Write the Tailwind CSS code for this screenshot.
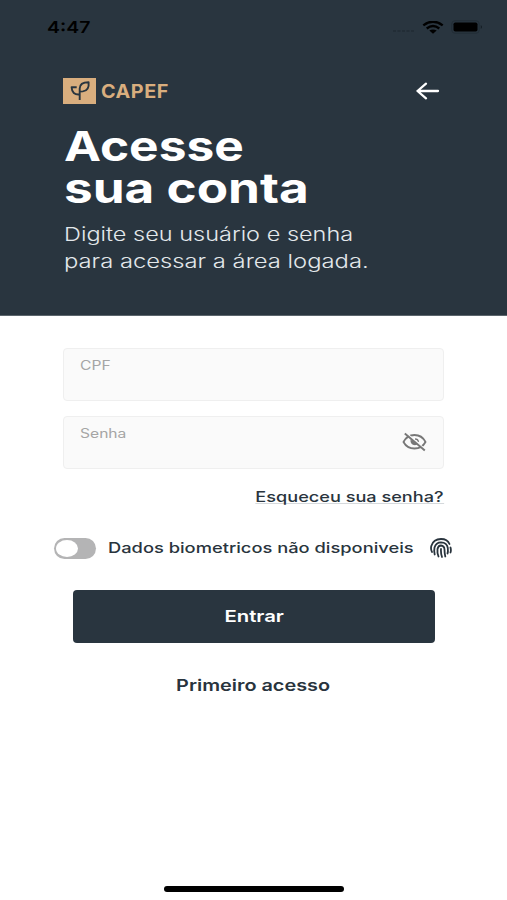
<!DOCTYPE html>
<html lang="pt-BR">
<head>
<meta charset="utf-8">
<meta name="viewport" content="width=device-width, initial-scale=1">
<title>CAPEF</title>
<script src="https://cdn.jsdelivr.net/npm/@tailwindcss/browser@4"></script>
</head>
<body class="bg-white">
<div class="flex h-[900px] w-[507px] flex-col overflow-hidden whitespace-nowrap bg-white font-['Inter',sans-serif] text-[#29343d]">
  <header class="flex h-[316px] shrink-0 flex-col border-b border-[#5b656c] bg-[#29353f]">
    <div class="flex h-[54px] items-center pl-[47px] pr-[24px] text-black">
      <span class="origin-left scale-x-[1.18] text-[16.5px] font-semibold leading-none">4:47</span>
      <div class="ml-auto flex items-center">
        <svg class="mt-[7px] mr-[6px]" width="24" height="4" viewBox="0 0 24 4"><path d="M1 2H23" stroke="#222d36" stroke-width="2" stroke-dasharray="3 1.5" fill="none"/></svg>
        <svg width="22" height="13" viewBox="0 0 22 13" fill="none" stroke="#000"><path d="M1.3 4.4Q11-3 20.700 4.400" stroke-width="2.400"/><path d="M4.700 7.500Q11 2.600 17.300 7.500" stroke-width="2.300"/><path d="M7.300 9.600Q11 7.200 14.700 9.600L11 12.800Z" fill="#000" stroke="none"/></svg>
        <svg class="ml-[7px]" width="32" height="14" viewBox="0 0 32 14"><rect x=".8" y=".8" width="27.400" height="12.400" rx="3" fill="none" stroke="#222d36" /><rect x="2.500" y="2.500" width="24" height="9" rx="1.800"/><path d="M29.800 5Q32 7 29.800 9Z" fill="#111a20"/></svg>
      </div>
    </div>
    <div class="flex h-[70px] items-center pl-[63px] pr-[67px]">
      <svg class="mt-[3px]" width="33" height="26" viewBox="0 0 33 26"><rect width="33" height="26" fill="#d9ae7e"/><g fill="none" stroke="#29353f" stroke-width="1.900" stroke-linejoin="round"><path d="M16.700 22V10.500Q16.800 4.400 25.600 4.300Q26.500 12.500 19.800 13.400L16.700 13.600"/><path d="M16.600 16.500Q9 17.200 8.600 9.300H13.700"/></g></svg>
      <span class="ml-[5px] mt-[4px] origin-left scale-x-[1.04] text-[19px] font-bold leading-none tracking-[0.5px] text-[#d9ae7e]">CAPEF</span>
      <svg class="ml-auto mt-[3px]" width="25" height="18" viewBox="0 0 25 18" fill="none" stroke="#fff" stroke-width="2.300" stroke-linecap="round" stroke-linejoin="round"><path d="M11 1.700L2.500 9L11 16.300M2.500 9H23"/></svg>
    </div>
    <h1 class="ml-[64px] mt-px text-[41px] font-bold leading-[42px] text-white">
      <span class="block w-max origin-left scale-x-[1.21]">Acesse</span>
      <span class="block w-max origin-left scale-x-[1.25]">sua conta</span>
    </h1>
    <p class="ml-[64px] mt-[12px] text-[18.5px] font-light leading-[27px] text-[#e3e8eb]">
      <span class="block w-max origin-left scale-x-[1.27]">Digite seu usuário e senha</span>
      <span class="block w-max origin-left scale-x-[1.285]">para acessar a área logada.</span>
    </p>
  </header>
  <main class="flex flex-1 flex-col pt-[32px]">
    <div class="mx-[63px] h-[53px] rounded-[4px] border border-[#efefef] bg-[#fafafa] pl-[16px] pt-[8px]">
      <label class="block w-max origin-left scale-x-[1.25] text-[12.5px] leading-[17px] text-[#a5a5a5]">CPF</label>
    </div>
    <div class="mx-[63px] mt-[15px] flex h-[53px] rounded-[4px] border border-[#efefef] bg-[#fafafa] pl-[16px] pr-[16px] pt-[8px]">
      <label class="block h-[17px] w-max origin-left scale-x-[1.25] text-[12.5px] leading-[17px] text-[#a5a5a5]">Senha</label>
      <svg class="ml-auto mt-[7px]" width="25" height="20" viewBox="0 0 25 20" fill="none" stroke="#777"><path d="M1.500 10Q5 3 12.500 3T23.500 10Q20 16.500 12.500 16.500T1.500 10Z" stroke-width="1.800"/><path d="M8.500 7.500Q8 12.800 13 13.200L15.800 12.300Z" fill="#777" stroke="none"/><path d="M13 7Q16 7 16.500 9.800" stroke-width="1.300"/><path d="M4 .8L24 18" stroke="#fafafa" stroke-width="1.500"/><path d="M2.800 1.500L22.800 18.500" stroke-width="1.900"/></svg>
    </div>
    <div class="mr-[63px] mt-[17px] flex h-[21px] justify-end">
      <a class="h-[18px] w-max origin-right scale-x-[1.25] border-b border-[#d5d9dc] text-[14.5px] font-medium leading-[21px]">Esqueceu sua senha?</a>
    </div>
    <div class="mt-[30px] flex h-[22px] items-center pl-[54px] pr-[55px]">
      <div class="flex h-[21px] w-[42px] items-center rounded-full bg-[#b4b4b5] pl-[2px]"><div class="h-[17px] w-[22px] rounded-[50%] bg-white"></div></div>
      <span class="ml-[12px] origin-left scale-x-[1.262] text-[14.5px] font-medium leading-none">Dados biometricos não disponiveis</span>
      <svg class="ml-auto" width="22" height="20" viewBox="0 0 22 20" fill="none" stroke="#29343d" stroke-width="1.800" stroke-linecap="round"><path d="M2 14Q.5 11.500 1.300 8Q3.500 1 11 1Q17.500 1 19.500 6"/><path d="M4.700 16.500Q3.800 13 4.500 9.500Q6 4.300 11 4.300Q17 4.500 17.800 10Q18.200 14 17.500 15.500"/><path d="M8.500 18.500Q7 14.500 7.500 11Q8.200 7.600 11 7.500Q14.300 7.800 14.500 11.500Q14.500 15.500 15.300 18.500"/><path d="M11 11Q10.700 15.500 12 19"/><path d="M20.500 9.500Q21.300 12.500 20.500 14.500"/></svg>
    </div>
    <button class="ml-[73px] mr-[72px] mt-[31px] flex h-[53px] shrink-0 items-center justify-center rounded-[4px] bg-[#29353f] text-white"><span class="scale-x-[1.23] text-[16.5px] font-semibold leading-none">Entrar</span></button>
    <div class="mt-[31px] flex h-[21px] items-center justify-center"><a class="scale-x-[1.24] text-[16px] font-semibold leading-none">Primeiro acesso</a></div>
    <div class="ml-[164px] mb-[8px] mt-auto h-[6px] w-[180px] rounded-full bg-black"></div>
  </main>
</div>
</body>
</html>
